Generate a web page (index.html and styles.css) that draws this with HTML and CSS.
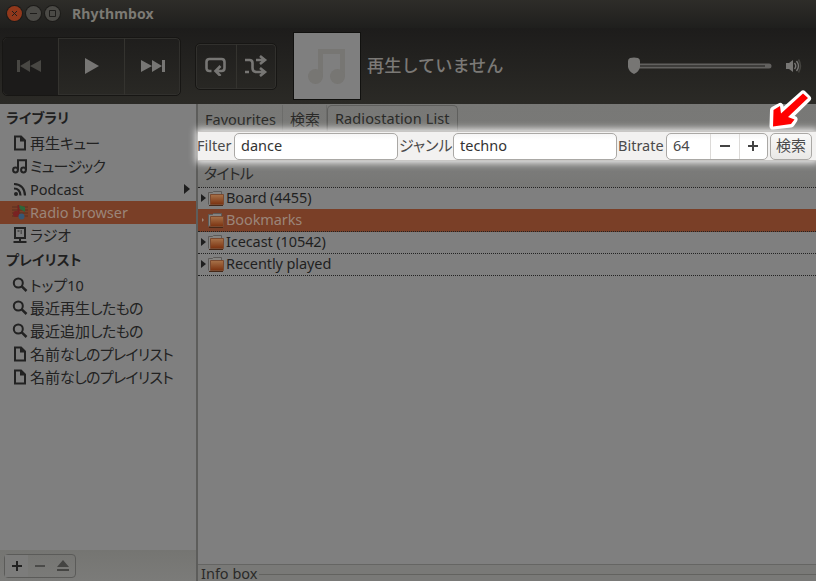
FILE: index.html
```html
<!DOCTYPE html>
<html lang="ja">
<head>
  <meta charset="UTF-8" />
  <title>Rhythmbox</title>
  <link rel="stylesheet" href="styles.css">
</head>
<body>
  <!-- Shared icons -->
  <svg class="defs" width="0" height="0">
    <symbol id="doc" viewBox="0 0 16 16"><path d="M3 1.500h6l4 4v9H3z" fill="none" stroke="currentColor" stroke-width="2"/><path d="M8 1v5.500h5z" fill="currentColor"/></symbol>
    <symbol id="search" viewBox="0 0 16 16"><circle cx="6.300" cy="6" r="4.500" fill="none" stroke="currentColor" stroke-width="2"/><path d="M9.500 9.200L14.500 14" stroke="currentColor" stroke-width="2.500"/></symbol>
    <symbol id="note" viewBox="0 0 16 16"><path d="M6 12V2.200H14V12" fill="none" stroke="currentColor" stroke-width="2"/><circle cx="3.500" cy="12" r="2.400" fill="none" stroke="currentColor" stroke-width="2"/><circle cx="11.500" cy="12" r="2.400" fill="none" stroke="currentColor" stroke-width="2"/></symbol>
    <symbol id="folder" viewBox="0 0 16 16">
      <linearGradient id="fg" x1="0" y1="0" x2="0" y2="1"><stop offset="0" stop-color="#a8734a"/><stop offset="1" stop-color="#7a3210"/></linearGradient>
      <path d="M.5 14.500V2.500h4l1-1h8v3" fill="#858380" stroke="#5c5a58"/>
      <path d="M2.500 4.500h13v10h-13z" fill="url(#fg)" stroke="#7a4a30"/><path d="M1 15.500h14" stroke="#452818"/>
    </symbol>
  </svg>

  <div class="titlebar">
    <span class="wm close"><svg width="15" height="15"><path d="M5 5l5 5M10 5l-5 5"/></svg></span>
    <span class="wm"><svg width="15" height="15"><path d="M4 7.500h7"/></svg></span>
    <span class="wm"><svg width="15" height="15"><path d="M4.500 4.500h6v6h-6z"/></svg></span>
    <h1>Rhythmbox</h1>
  </div>

  <header class="toolbar">
    <div class="group transport">
      <button class="off"><svg width="26" height="14"><path d="M1 1h3v12H1zM14 1v12L4 7zM25 1v12L14 7z"/></svg></button>
      <button><svg width="16" height="16"><path d="M1 0v16L15 8z"/></svg></button>
      <button class="next"><svg width="26" height="14"><path d="M1 1v12L12 7zM12 1v12L22 7zM22 1h3v12h-3z"/></svg></button>
    </div>
    <div class="group modes">
      <button><svg width="24" height="20"><path class="line" d="M7.500 15H5.500q-3 0-3-3V6q0-3 3-3h12q3 0 3 3v6q0 3-3 3h-4M16.500 10l-5 5 5 5"/></svg></button>
      <button><svg width="24" height="22"><path class="line" d="M1 5h4.500q3 0 3 3v5q0 4 4 4H20M12 5h8M1 17h4M16 1l5 4-5 4M16 13l5 4-5 4"/></svg></button>
    </div>
    <div class="cover"><svg width="40" height="38"><path d="M13.500 30V4.500h22V30" fill="none" stroke="#777673" stroke-width="5"/><circle cx="8.500" cy="29.500" r="7.500"/><circle cx="30.500" cy="29.500" r="7.500"/></svg></div>
    <div class="now">再生していません</div>
    <div class="volume">
      <svg width="146" height="18"><path d="M13 9h129" stroke="#62615f" stroke-width="5" stroke-linecap="round"/><path d="M13 9h125" stroke="#1b1a19"/><path d="M3 1q4-1 8 0 2 1 2 3v6q-1 5-6 7-5-2-6-7V4q0-2 2-3z" fill="#777674"/></svg>
      <svg width="18" height="16"><path d="M1 5h3l4-3v12l-4-3H1z" fill="#777674"/><path d="M9.500 5q2.500 3 0 6M11.500 3q4 5 0 10" fill="none" stroke="#777674" stroke-width="1.400"/><path d="M13.500 1.500q4 6.500 0 13" fill="none" stroke="#44433f" stroke-width="1.500"/></svg>
    </div>
  </header>

  <main>
    <aside>
      <h2>ライブラリ</h2>
      <ul>
        <li><svg><use href="#doc"/></svg><span>再生<span class="kana">キュー</span></span></li>
        <li><svg><use href="#note"/></svg><span class="kana">ミュージック</span></li>
        <li><svg viewBox="0 0 16 16"><circle cx="4" cy="13" r="2" fill="currentColor"/><path d="M2 7.500q6 0 6.500 7M2 3q10.500.5 11 11.500" fill="none" stroke="currentColor" stroke-width="2.200"/></svg><span class="latin">Podcast</span><i class="tri"></i></li>
        <li class="selected"><svg viewBox="0 0 16 16"><path d="M0 3h16M0 6h16M0 9h16M0 12h16" stroke="#512c1e" stroke-width=".8"/><path d="M6.500 1v9" stroke="#742020" stroke-width="2"/><circle cx="4" cy="10" r="3" fill="#792222"/><path d="M7 1l6 2v5l-5-3z" fill="#2c6739"/><circle cx="9.500" cy="12.500" r="3" fill="#365773"/></svg><span class="latin">Radio browser</span></li>
        <li><svg viewBox="0 0 16 16"><path d="M3 1h10v10H3zM8 11v3M1.500 15h13" fill="none" stroke="currentColor" stroke-width="2"/><path d="M5.500 4h2M8.500 4h1.500M8.500 6h1.500" stroke="currentColor"/></svg><span>ラジオ</span></li>
      </ul>
      <h2>プレイリスト</h2>
      <ul>
        <li><svg><use href="#search"/></svg><span>トップ<span class="latin">10</span></span></li>
        <li><svg><use href="#search"/></svg><span>最近再生<span class="kana">したもの</span></span></li>
        <li><svg><use href="#search"/></svg><span>最近追加<span class="kana">したもの</span></span></li>
        <li><svg><use href="#doc"/></svg><span>名前<span class="kana">なしのプレイリスト</span></span></li>
        <li><svg><use href="#doc"/></svg><span>名前<span class="kana">なしのプレイリスト</span></span></li>
      </ul>
      <div class="source-bar">
        <div class="source-buttons">
          <button class="add"><svg width="12" height="12"><path d="M6 1v10M1 6h10" stroke="#222" stroke-width="2"/></svg></button>
          <button><svg width="12" height="12"><path d="M1 6h10" stroke="#4b4b49" stroke-width="2"/></svg></button>
          <button><svg width="14" height="14"><path d="M7 1l6 7H1zM1 10h12v2H1z" fill="#444442"/></svg></button>
        </div>
      </div>
    </aside>

    <section class="content">
      <nav class="tabs">
        <div class="tab fav latin">Favourites</div>
        <div class="tab find">検索</div>
        <div class="tab active latin">Radiostation List</div>
      </nav>

      <form class="filter">
        <label class="latin l-filter">Filter</label>
        <div class="entry latin">dance</div>
        <label class="l-genre">ジャンル</label>
        <div class="entry latin">techno</div>
        <label class="latin l-bitrate">Bitrate</label>
        <div class="spin"><span class="latin">64</span><b><svg width="12" height="12"><path d="M1 6h10"/></svg></b><b><svg width="12" height="12"><path d="M1 6h10M6 1v10"/></svg></b></div>
        <div class="go">検索</div>
      </form>

      <div class="list">
        <div class="list-head"><span class="kana">タイトル</span></div>
        <div class="row"><i class="tri"></i><svg><use href="#folder"/></svg><span class="latin">Board (4455)</span></div>
        <div class="row selected"><i class="tri"></i><svg><use href="#folder"/></svg><span class="latin">Bookmarks</span></div>
        <div class="row"><i class="tri"></i><svg><use href="#folder"/></svg><span class="latin">Icecast (10542)</span></div>
        <div class="row"><i class="tri"></i><svg><use href="#folder"/></svg><span class="latin">Recently played</span></div>
      </div>

      <div class="info"><span class="latin">Info box</span></div>
    </section>
  </main>

  <svg class="arrow" width="48" height="48"><path d="M35 6L39.500 10.500L20.500 29L26 31.500L23 36L5 38L5.500 22L12 18.500L13 25.500z" stroke="#fff" stroke-width="7" fill="#fff" stroke-linejoin="round"/><path d="M35 5.500L40 10L20 29L26.500 31.500L23 36L5 38.500L5.500 22L12 18L13 25.500z" fill="#f00"/></svg>
</body>
</html>
```

FILE: styles.css
```css
*, *::before, *::after {
  box-sizing: border-box;
}

body {
  margin: 0;
  width: 816px;
  height: 581px;
  overflow: hidden;
  display: flex;
  flex-direction: column;
  position: relative;
  background: #7f7f7f;
  color: #222;
  font-family: "Noto Sans CJK JP", sans-serif;
  font-size: 15px;
  line-height: 20px;
  white-space: nowrap;
}

h1, h2, ul {
  margin: 0;
  padding: 0;
  list-style: none;
}

svg {
  display: block;
  flex: none;
}

button {
  padding: 0;
  border: none;
  background: none;
  display: flex;
  align-items: center;
  justify-content: center;
}

.defs {
  position: absolute;
}

.latin {
  font-family: "Noto Sans", sans-serif;
  font-size: 14.5px;
}

.kana {
  letter-spacing: -0.7px;
}

/* Title bar */
.titlebar {
  height: 28px;
  flex: none;
  display: flex;
  align-items: center;
  gap: 4px;
  padding: 0 0 1px 7px;
  background: linear-gradient(#2e2d29, #1f1f1d);
}

.titlebar h1 {
  margin-left: 8px;
  font: bold 14px/20px "Noto Sans", sans-serif;
  letter-spacing: 0.15px;
  color: #7c7a74;
}

.wm {
  width: 15px;
  height: 15px;
  border-radius: 50%;
  background: #4b4a46;
  box-shadow: 0 0 0 1px #1c1b19;
}

.wm path {
  fill: none;
  stroke: #1e1d1b;
}

.close {
  background: #91381b;
}

/* Player toolbar */
.toolbar {
  height: 76px;
  flex: none;
  display: flex;
  align-items: center;
  padding-left: 2px;
  background: linear-gradient(#1d1c1b, #2b2a26);
}

.group {
  display: flex;
  border: 1px solid #171614;
  border-radius: 5px;
  box-shadow: inset 0 0 0 1px #31302d;
}

.group button {
  fill: #777674;
  border-left: 1px solid #34332f;
}

.group button:first-child {
  border-left: none;
}

.transport {
  width: 179px;
  height: 59px;
}

.transport button {
  flex: 1;
}

.transport .off {
  flex: 0 0 55px;
  padding-right: 3px;
  background: #1c1b1a;
  fill: #484743;
  border-radius: 5px 0 0 5px;
}

.transport .next {
  flex: 0 0 56px;
}

.modes {
  width: 82px;
  height: 47px;
  margin-left: 14px;
}

.modes button {
  flex: 1;
}

.line {
  fill: none;
  stroke: #777674;
  stroke-width: 2.6;
}

.cover {
  width: 68px;
  height: 68px;
  margin-left: 16px;
  border: 1px solid #11110f;
  background: #7f7f7f;
  display: flex;
  align-items: center;
  justify-content: center;
  fill: #777673;
}

.now {
  margin: -2px 0 0 6px;
  font-size: 17.2px;
  font-weight: 500;
  color: #7b7976;
}

.volume {
  margin-left: auto;
  margin-right: 13px;
  display: flex;
  align-items: center;
  gap: 12px;
}

/* Sources */
main {
  flex: 1;
  min-height: 0;
  display: flex;
}

aside {
  width: 198px;
  padding-top: 1px;
  display: flex;
  flex-direction: column;
  border-right: 2px solid #5d5d5b;
}

aside h2,
aside li,
.list-head,
.l-genre {
  font-feature-settings: "palt";
}

aside h2 {
  height: 27px;
  padding-left: 6px;
  font-size: 14px;
  line-height: 24px;
  font-weight: 700;
  color: #1f1f1f;
}

aside li {
  height: 23px;
  display: flex;
  align-items: center;
  padding-left: 12px;
}

aside li > span {
  margin-top: -2px;
}

aside li svg {
  width: 16px;
  height: 16px;
  margin: -1px 2px 0 0;
}

.selected {
  background: #7a3f27;
  color: #9b8579;
}

.tri {
  border-left: 6px solid #1e1e1e;
  border-top: 5px solid transparent;
  border-bottom: 5px solid transparent;
}

aside .tri {
  margin: -2px 6px 0 auto;
}

.source-bar {
  margin-top: auto;
  height: 31px;
  padding: 4px;
  background: linear-gradient(#757572, #7b7b79);
}

.source-buttons {
  width: 72px;
  height: 24px;
  display: flex;
  border: 1px solid #5b5b59;
  border-radius: 4px;
}

.source-buttons button {
  flex: 1;
}

.source-buttons .add {
  background: #7c7c7b;
}

/* Content */
.content {
  flex: 1;
  min-width: 0;
  display: flex;
  flex-direction: column;
}

.tabs {
  height: 27px;
  flex: none;
  padding-top: 1px;
  display: flex;
  background: linear-gradient(#787876, #797977);
}

.tab {
  line-height: 28px;
  padding-left: 7px;
  color: #292927;
  border-right: 1px solid #6c6c6a;
}

.fav {
  width: 85px;
}

.find {
  width: 44px;
}

.active {
  width: 131px;
  border: 1px solid #5f5f5d;
  border-bottom: none;
  border-radius: 5px 5px 0 0;
  line-height: 25px;
  letter-spacing: 0.1px;
}

.filter {
  height: 30px;
  flex: none;
  position: relative;
  z-index: 1;
  display: flex;
  align-items: center;
  background: #f2f1f0;
  border-bottom: 1px solid #c9c7c5;
  border-top: 1px solid #c9c7c5;
  box-shadow: 0 0 7px 2px #f2f1f0;
  color: #4a4a4a;
}

.filter label {
  margin-top: -2px;
}

.l-filter {
  width: 36px;
  text-indent: -1px;
}

.entry, .spin, .go {
  height: 27px;
  border: 1px solid #aaa8a5;
  border-radius: 5px;
  background: linear-gradient(#f6f6f6, #fff 6px);
}

.entry {
  width: 164px;
  padding-left: 6px;
  line-height: 23px;
  color: #333;
}

.l-genre {
  width: 55px;
  padding-left: 1px;
}

.l-bitrate {
  width: 49px;
  padding-left: 1px;
}

.spin {
  width: 102px;
  display: flex;
  align-items: center;
}

.spin span {
  width: 43px;
  margin-top: -2px;
  padding-left: 6px;
}

.spin b {
  flex: 1;
  height: 100%;
  display: flex;
  align-items: center;
  justify-content: center;
  padding-bottom: 1px;
  border-left: 1px solid #dcdad8;
}

.spin path {
  stroke: #444;
  stroke-width: 2;
}

.go {
  width: 42px;
  margin-left: 2px;
  text-align: center;
  line-height: 22px;
  background: linear-gradient(#f9f9f8, #e9e8e6);
}

.list-head {
  height: 27px;
  padding-left: 6px;
  line-height: 23px;
  color: #2a2a29;
  background: linear-gradient(#7d7d7c, #777775);
  border-bottom: 1px dotted #222;
}

.row {
  height: 22px;
  display: flex;
  align-items: center;
  padding-left: 3px;
  color: #1f1f1f;
  border-bottom: 1px dotted #222;
}

.row span {
  margin-top: -3px;
  letter-spacing: -0.1px;
}

.row:nth-child(2) {
  height: 21px;
  border-bottom: none;
}

.row.selected {
  height: 23px;
  color: #9b8579;
}

.row .tri {
  margin-top: -2px;
  border-left-width: 5px;
  border-top-width: 4px;
  border-bottom-width: 4px;
}

.row.selected .tri {
  border-width: 2px;
  border-left-color: #9b8579;
  border-right: none;
  margin: 0 2px 0 1px;
}

.row svg {
  width: 16px;
  height: 16px;
  margin: -1px 2px 0 2px;
}

.info {
  margin-top: auto;
  height: 17px;
  flex: none;
  display: flex;
  align-items: center;
  gap: 2px;
  padding-left: 3px;
  border-top: 1px solid #656563;
  background: #797977;
  color: #2a2a29;
  line-height: 16px;
}

.info::after {
  content: "";
  flex: 1;
  height: 1px;
  margin-top: 2px;
  background: #62625f;
}

.arrow {
  position: absolute;
  z-index: 2;
  left: 768px;
  top: 88px;
}
```
